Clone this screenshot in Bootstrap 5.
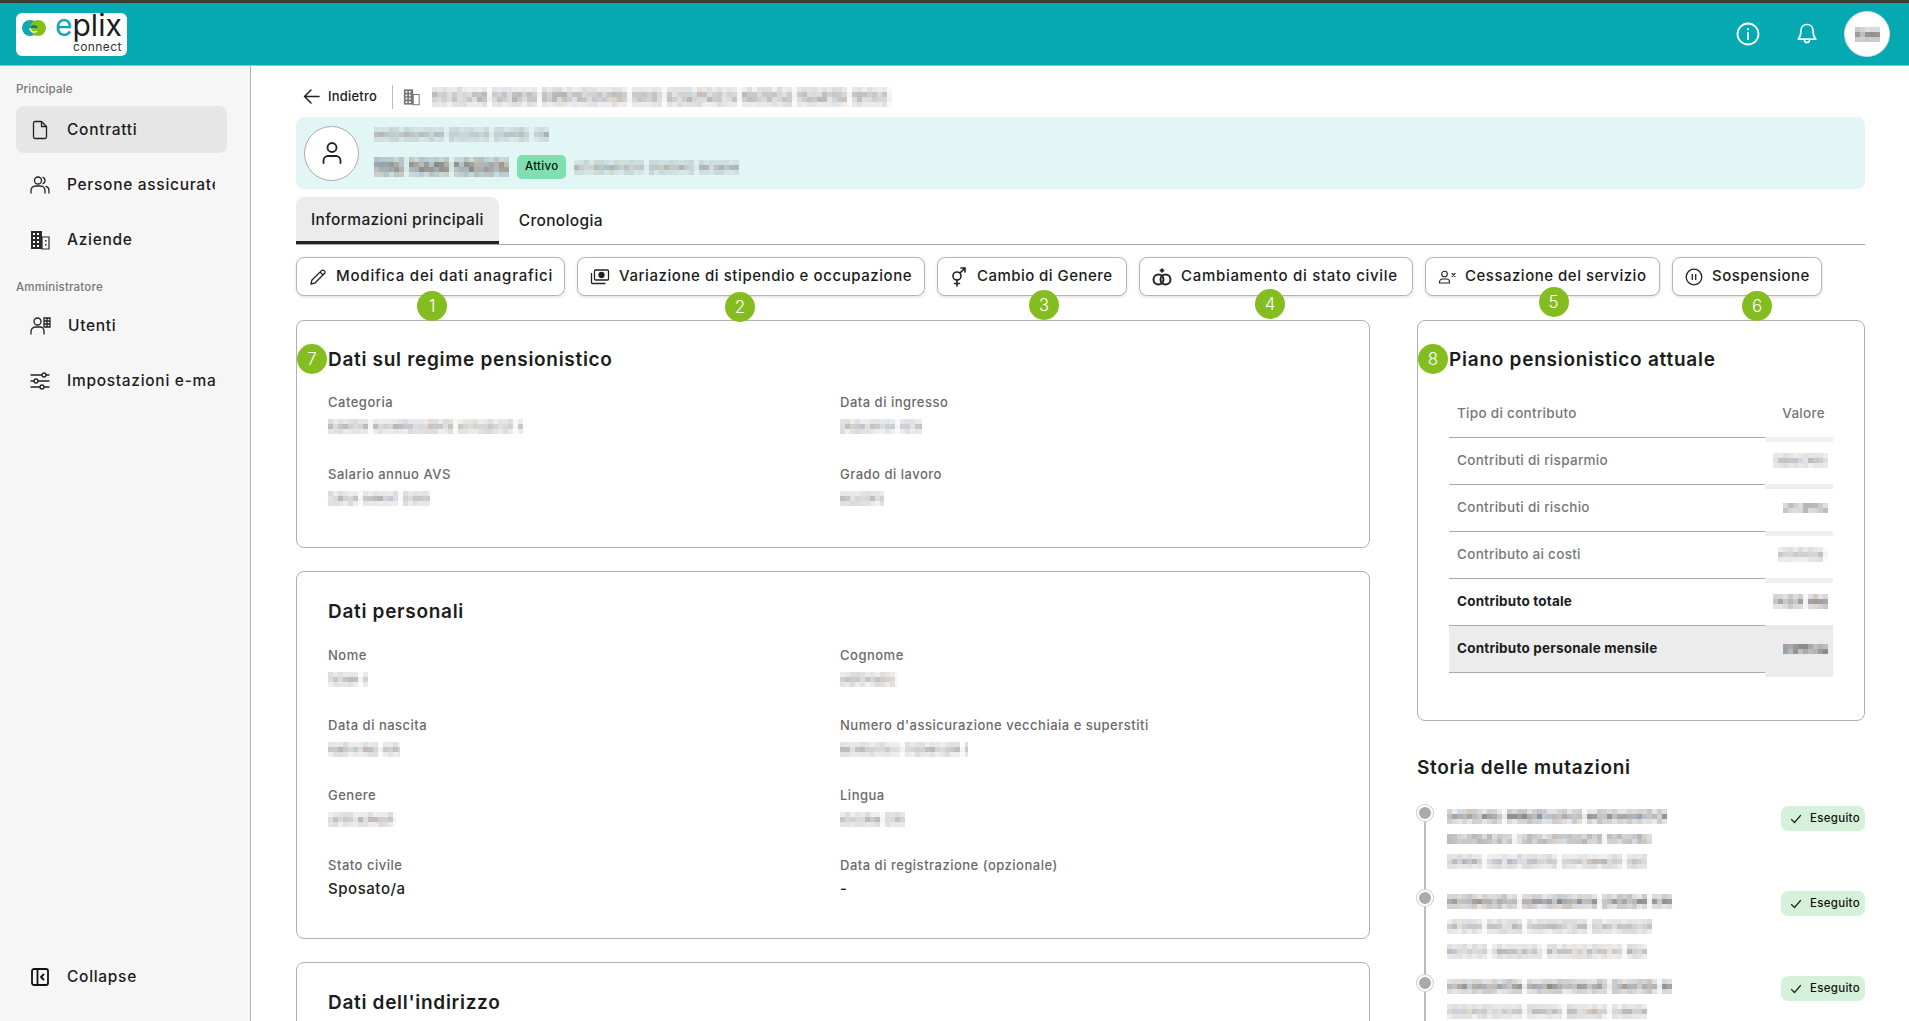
<!DOCTYPE html>
<html lang="it">
<head>
    <meta charset="UTF-8">
    <meta name="viewport" content="width=device-width, initial-scale=1.0">
    <title>ePlix Connect</title>
    <link href="https://cdn.jsdelivr.net/npm/bootstrap@5.3.0/dist/css/bootstrap.min.css" rel="stylesheet">
    <style>
        html, body { height: 100%; overflow: hidden; }
        body { font-family: Inter, "Open Sans", sans-serif; color: #1c1c1c; background: #fff; }
        svg { display: block; flex-shrink: 0; }

        .shell { height: 100vh; }
        .topbar { height: 66px; flex-shrink: 0; background: #04a9b1; border-top: 3px solid #3b3b3b; border-bottom: 1px solid #b5b5b5; padding: 0 19px 0 16px; }
        .logo-box { width: 111px; height: 43px; background: #fff; border-radius: 6px; padding: 0 7px 0 6px; gap: 9px; }
        .logo-mark { margin-top: 4px; }
        .logo-word { font-size: 30px; line-height: 26px; margin-top: -1px; letter-spacing: 0; color: #1d1d1d; white-space: nowrap; }
        .logo-word b { color: #11a6b3; font-weight: 400; }
        .logo-sub { font-size: 12px; line-height: 11px; margin-top: 3px; letter-spacing: .4px; color: #333; text-align: right; }
        .top-avatar { width: 46px; height: 46px; border-radius: 50%; background: #fff; border: 1px solid #ddd; margin-left: -10px; }
        .top-icons { gap: 35px; }

        .side { width: 251px; flex-shrink: 0; background: #f6f6f6; border-right: 1px solid #b0b0b0; padding: 14px 23px 21px 16px; }
        .side-head { font-size: 11.5px; line-height: 18px; font-weight: 500; color: #777; letter-spacing: .2px; }
        .side-head.is-second { margin-top: 15px; margin-bottom: 6px; }
        .side-link { height: 47px; gap: 17px; padding-left: 14px; border-radius: 8px; color: #1c1c1c; text-decoration: none; font-size: 15.5px; font-weight: 500; letter-spacing: .7px; }
        .side-link.is-on { background: #e6e6e6; }
        .side-link span { max-width: 148px; overflow: hidden; white-space: nowrap; }

        .main-area { padding: 0 44px 0 45px; min-width: 0; overflow: hidden; }
        .crumbs { height: 51px; padding-top: 10px; }
        .back-link { font-size: 13px; font-weight: 500; color: #1c1c1c; text-decoration: none; gap: 8px; padding-left: 7px; letter-spacing: .2px; }
        .crumb-sep { width: 1px; height: 24px; background: #bbb; margin: 0 10px 0 15px; }
        .person-band { height: 72px; background: #e3f6f6; border-radius: 8px; padding: 0 8px; gap: 15px; }
        .person-pic { width: 55px; height: 55px; border-radius: 50%; background: #fff; border: 1px solid #aaa; }
        .person-lines { gap: 13px; }
        .state-pill { background: #7fdfb0; border-radius: 5px; font-size: 11.5px; font-weight: 500; letter-spacing: .3px; height: 24px; padding: 0 8px; color: #111; }

        .page-tabs { margin-top: 8px; border-bottom: 1px solid #aaa; height: 48px; }
        .page-tabs .nav-link { height: 47px; padding: 0 15px; color: #1c1c1c; font-size: 15.5px; font-weight: 500; border-radius: 8px 8px 0 0; letter-spacing: .35px; }
        .page-tabs .nav-link.active { background: #ececec; border-bottom: 3px solid #222; padding-top: 2px; color: #1c1c1c; }
        .page-tabs .nav-item + .nav-item .nav-link { margin-left: 5px; }

        .action-row { gap: 12px; margin-top: 12px; }
        .act-btn { height: 39px; gap: 9px; padding: 0 0 0 12px; background: #fff; border: 1px solid #b5b5b5; border-radius: 8px; box-shadow: 0 1px 3px rgba(0,0,0,.15); color: #1c1c1c; font-size: 15px; font-weight: 500; white-space: nowrap; }
        .act-btn:hover { background: #fff; color: #1c1c1c; border-color: #b5b5b5; }
        .act-one { width: 269px; letter-spacing: .8px; }
        .act-two { width: 348px; letter-spacing: .57px; }
        .act-three { width: 190px; letter-spacing: .45px; }
        .act-four { width: 274px; letter-spacing: .7px; }
        .act-five { width: 235px; letter-spacing: .5px; }
        .act-six { width: 150px; letter-spacing: .45px; }
        .step-dot { position: absolute; width: 30px; height: 30px; border-radius: 50%; background: #84bd1f; color: #fff; font-size: 17px; font-weight: 300; line-height: 30px; text-align: center; letter-spacing: 0; z-index: 2; }
        .act-btn .step-dot { left: 50%; top: 100%; }
        .act-btn .step-a { margin-left: -13.500px; margin-top: -4px; }
        .act-btn .step-b { margin-left: -26px; margin-top: -3px; }
        .act-btn .step-c { margin-left: -3px; margin-top: -5px; }
        .act-btn .step-d { margin-left: -21px; margin-top: -6px; }
        .act-btn .step-e { margin-left: -4px; margin-top: -8px; }
        .act-btn .step-f { margin-left: -5px; margin-top: -4px; }

        .cols { gap: 47px; margin-top: 24px; align-items: flex-start; }
        .col-left { width: 1074px; flex-shrink: 0; }
        .col-right { width: 448px; flex-shrink: 0; }
        .info-card { border: 1px solid #b0b0b0; border-radius: 8px; margin-bottom: 23px; padding: 25px 31px 39px; position: relative; }
        .info-card.first-card { padding: 24px 31px 39px; }
        .info-card.first-card .field-grid { row-gap: 28px; }
        .info-card.cut-card { padding-bottom: 24px; }
        .info-title { font-size: 19px; line-height: 30px; font-weight: 600; letter-spacing: .7px; margin: 0 0 18px; }
        .first-card .info-title { margin-bottom: 17px; }
        .step-dot.on-title { left: 0; top: 23px; }
        .field-grid { grid-template-columns: 512px 1fr; row-gap: 26px; }
        .field-label { font-size: 13px; line-height: 20px; font-weight: 500; color: #6a6a6a; letter-spacing: .5px; }
        .field-value { min-height: 20px; margin-top: 4px; font-size: 15px; line-height: 20px; font-weight: 500; letter-spacing: .55px; }
        .field-value .smudge { display: block; padding-top: 3px; }

        .plan-card { padding: 24px 31px 43px; margin-bottom: 32px; }
        .info-title.plan-head { margin-bottom: 15px; letter-spacing: .75px; }
        .info-title.mut-head { margin-bottom: 22px; }
        .plan-table { --bs-table-bg: transparent; margin: 0; table-layout: fixed; }
        .plan-table th, .plan-table td { height: 47px; padding: 0 8px; vertical-align: middle; border-bottom: 1px solid #aaa; font-size: 13.5px; font-weight: 500; color: #777; letter-spacing: .3px; }
        .plan-table .val-cell { width: 68px; padding: 0 5px 0 0; text-align: right; border-bottom: 0; }
        .plan-table th.val-cell { padding-right: 8px; }
        .plan-table td.val-cell { box-shadow: inset 0 5px 0 #efefef; }
        .plan-table .val-cell svg { margin-left: auto; }
        .plan-table tr.is-sum td { color: #1c1c1c; font-weight: 700; letter-spacing: .2px; }
        .plan-table tr.is-month td { background: #ececec; }
        .plan-table tr.is-month td.val-cell { box-shadow: inset 0 5px 0 #e8e8e8; }
        .plan-table tr.tail-row td { height: 5px; padding: 0; border: 0; box-shadow: none; }
        .plan-table tr.tail-row td.val-cell { background: #ececec; }

        .mut-item { height: 85px; gap: 14px; }
        .mut-track { width: 16px; flex-shrink: 0; }
        .mut-dot { width: 16px; height: 16px; border-radius: 50%; background: #aaa; border: 2px solid #fff; box-shadow: 0 0 0 1px #ccc; flex-shrink: 0; }
        .mut-line { width: 2px; flex-grow: 1; background: #bbb; margin-top: 1px; }
        .mut-lines { gap: 10px; padding-top: 4px; }
        .ok-pill { height: 25px; width: 84px; gap: 8px; padding-left: 9px; background: #d5f1d9; border-radius: 7px; font-size: 11.5px; font-weight: 500; letter-spacing: .3px; color: #111; margin-top: 1px; }
    </style>
</head>
<body>
<div class="shell d-flex flex-column">

    <header class="topbar d-flex align-items-center justify-content-between">
        <div class="logo-box d-flex">
            <svg class="logo-mark" width="24" height="24" viewBox="0 0 24 24" aria-hidden="true">
                <circle cx="8" cy="11" r="8" fill="#11a6b3"/>
                <circle cx="16" cy="11" r="8" fill="#86bf20"/>
                <path d="M8 11h8a4.200 4.200 0 0 0-8 0z" fill="#0b7f76"/>
                <path d="M8 11a4.200 4.200 0 0 0 7 3" fill="none" stroke="#e7f2c5" stroke-width="1.600"/>
            </svg>
            <div class="flex-grow-1">
                <div class="logo-word"><b>e</b>plix</div>
                <div class="logo-sub">connect</div>
            </div>
        </div>
        <div class="top-icons d-flex align-items-center">
            <svg width="24" height="24" viewBox="0 0 24 24" fill="none" stroke="#fff" stroke-width="1.800" stroke-linecap="round"><circle cx="12" cy="12" r="10.500"/><path d="M12 11v6"/><path d="M12 7v.4"/></svg>
            <svg width="24" height="24" viewBox="0 0 24 24" fill="none" stroke="#fff" stroke-width="1.700" stroke-linejoin="round"><path d="M12 2.500c-3.600 0-6 2.700-6 6.200 0 4.500-1 6.400-2.800 8.500h17.600C19 15.100 18 13.200 18 8.700c0-3.500-2.400-6.200-6-6.200z"/><path d="M9.500 18a2.500 2.500 0 0 0 5 0"/></svg>
            <div class="top-avatar d-flex align-items-center justify-content-center"><span class="smudge" data-w="25" data-h="15" data-tone="dark"></span></div>
        </div>
    </header>

    <div class="d-flex flex-grow-1 overflow-hidden">
        <aside class="side d-flex flex-column">
            <div class="side-head mb-2">Principale</div>
            <nav class="nav flex-column gap-2">
                <a class="side-link is-on d-flex align-items-center" href="#">
                    <svg width="20" height="20" viewBox="0 0 20 20" fill="none" stroke="#222" stroke-width="1.300" stroke-linejoin="round"><path d="M3.500 3.200A1.700 1.700 0 0 1 5.200 1.500h6.300l5 5v10.300a1.700 1.700 0 0 1-1.700 1.700H5.200a1.700 1.700 0 0 1-1.700-1.700z"/><path d="M11.500 1.500v5h5"/></svg>
                    <span>Contratti</span>
                </a>
                <a class="side-link d-flex align-items-center" href="#">
                    <svg width="20" height="20" viewBox="0 0 20 20" fill="none" stroke="#222" stroke-width="1.300" stroke-linecap="round"><circle cx="8" cy="5.500" r="3.500"/><path d="M1 18v-2.500A4.500 4.500 0 0 1 5.500 11h5a4.500 4.500 0 0 1 4.500 4.500V18"/><path d="M13 2.300a3.500 3.500 0 0 1 0 6.400"/><path d="M16 11.300a4.500 4.500 0 0 1 3 4.200V18"/></svg>
                    <span>Persone assicurate</span>
                </a>
                <a class="side-link d-flex align-items-center" href="#">
                    <svg width="20" height="20" viewBox="0 0 20 20" aria-hidden="true"><path d="M1 1h11v18H1z" fill="#2a2a2a"/><path d="M12 7h7v12h-7z" fill="none" stroke="#2a2a2a" stroke-width="1.200"/><path d="M3 3h2v2H3zM7 3h2v2H7zM3 7h2v2H3zM7 7h2v2H7zM3 11h2v2H3zM7 11h2v2H7zM3 15h2v2H3zM7 15h2v2H7z" fill="#f6f6f6"/><path d="M15 10h1.500v1.500H15zM15 14h1.500v1.500H15z" fill="#2a2a2a"/></svg>
                    <span>Aziende</span>
                </a>
            </nav>
            <div class="side-head is-second">Amministratore</div>
            <nav class="nav flex-column gap-2">
                <a class="side-link d-flex align-items-center" href="#">
                    <svg width="21" height="20" viewBox="0 0 21 20" fill="none" stroke="#222" stroke-width="1.300" stroke-linecap="round"><circle cx="7.500" cy="5.500" r="3.500"/><path d="M1 18v-2.500A4.500 4.500 0 0 1 5.500 11H10a4 4 0 0 1 4 4v3"/><path d="M14 2h6v9h-6zM14 5h6M14 8h6M17 2v9"/></svg>
                    <span>Utenti</span>
                </a>
                <a class="side-link d-flex align-items-center" href="#">
                    <svg width="20" height="20" viewBox="0 0 20 20" fill="none" stroke="#222" stroke-width="1.300" stroke-linecap="round"><path d="M1 4h11M16 4h3M1 10h3M8 10h11M1 16h9M14 16h5"/><circle cx="14" cy="4" r="2"/><circle cx="6" cy="10" r="2"/><circle cx="12" cy="16" r="2"/></svg>
                    <span>Impostazioni e-mail</span>
                </a>
            </nav>
            <a class="side-link d-flex align-items-center mt-auto" href="#">
                <svg width="20" height="20" viewBox="0 0 20 20" fill="none" stroke="#111" stroke-width="1.800" stroke-linejoin="round"><rect x="2" y="2" width="16" height="16" rx="2"/><path d="M7.500 2v16"/><path d="M13.500 7.500 11 10l2.500 2.500" stroke-linecap="round"/></svg>
                <span>Collapse</span>
            </a>
        </aside>

        <main class="main-area flex-grow-1">
            <div class="crumbs d-flex align-items-center">
                <a class="back-link d-flex align-items-center" href="#">
                    <svg width="17" height="17" viewBox="0 0 17 17" fill="none" stroke="#222" stroke-width="1.500" stroke-linecap="round" stroke-linejoin="round"><path d="M16 8.500H1.500M8 2 1.500 8.500 8 15"/></svg>
                    Indietro
                </a>
                <div class="crumb-sep"></div>
                <svg class="me-2" width="17" height="18" viewBox="0 0 20 20" aria-hidden="true"><path d="M1 1h11v18H1z" fill="#777"/><path d="M12 7h7v12h-7z" fill="none" stroke="#777" stroke-width="1.200"/><path d="M3 3h2v2H3zM7 3h2v2H7zM3 7h2v2H3zM7 7h2v2H7zM3 11h2v2H3zM7 11h2v2H7zM3 15h2v2H3zM7 15h2v2H7z" fill="#fff"/></svg>
                <span class="smudge ms-1" data-w="460" data-h="20"></span>
            </div>

            <section class="person-band d-flex align-items-center">
                <div class="person-pic d-flex align-items-center justify-content-center">
                    <svg width="22" height="24" viewBox="0 0 22 24" fill="none" stroke="#222" stroke-width="1.800" stroke-linecap="round"><circle cx="11" cy="6.500" r="4.500"/><path d="M2.500 22v-2.500a4.500 4.500 0 0 1 4.500-4.500h8a4.500 4.500 0 0 1 4.500 4.500V22"/></svg>
                </div>
                <div class="person-lines d-flex flex-column">
                    <span class="smudge" data-w="175" data-h="15"></span>
                    <div class="d-flex align-items-center gap-2">
                        <span class="smudge" data-w="135" data-h="20" data-tone="dark"></span>
                        <span class="state-pill d-flex align-items-center">Attivo</span>
                        <span class="smudge" data-w="165" data-h="15"></span>
                    </div>
                </div>
            </section>

            <ul class="nav page-tabs">
                <li class="nav-item"><a class="nav-link active d-flex align-items-center" href="#">Informazioni principali</a></li>
                <li class="nav-item"><a class="nav-link d-flex align-items-center" href="#">Cronologia</a></li>
            </ul>

            <div class="action-row d-flex">
                <button class="btn act-btn act-one d-flex align-items-center position-relative" type="button">
                    <svg width="18" height="18" viewBox="0 0 18 18" fill="none" stroke="#222" stroke-width="1.300" stroke-linejoin="round"><path d="M2 16l.8-3.700L12.500 2.600a1.800 1.800 0 0 1 2.600 0l.3.300a1.800 1.800 0 0 1 0 2.600L5.700 15.200z"/><path d="M11 4l3 3"/></svg>
                    Modifica dei dati anagrafici
                    <span class="step-dot step-a">1</span>
                </button>
                <button class="btn act-btn act-two d-flex align-items-center position-relative" type="button">
                    <svg width="20" height="18" viewBox="0 0 20 18" fill="none" stroke="#222" stroke-width="1.300"><rect x="4.500" y="2" width="14" height="10" rx="1"/><circle cx="11.500" cy="7" r="2.500" fill="#222"/><path d="M1.500 5v9.500a1 1 0 0 0 1 1h13"/></svg>
                    Variazione di stipendio e occupazione
                    <span class="step-dot step-b">2</span>
                </button>
                <button class="btn act-btn act-three d-flex align-items-center position-relative" type="button">
                    <svg width="18" height="20" viewBox="0 0 18 20" fill="none" stroke="#222" stroke-width="1.600" stroke-linecap="round"><circle cx="7" cy="9" r="4"/><path d="M7 13v6M4.500 16.500h5M10 6l5-5M11 1h4v4"/></svg>
                    Cambio di Genere
                    <span class="step-dot step-c">3</span>
                </button>
                <button class="btn act-btn act-four d-flex align-items-center position-relative" type="button">
                    <svg width="20" height="20" viewBox="0 0 20 20" fill="none" stroke="#222" stroke-width="2"><circle cx="6.500" cy="12.500" r="5"/><circle cx="13.500" cy="12.500" r="5"/><path d="M10 1.500l2 2-2 2-2-2z" fill="#222" stroke-width="1"/></svg>
                    Cambiamento di stato civile
                    <span class="step-dot step-d">4</span>
                </button>
                <button class="btn act-btn act-five d-flex align-items-center position-relative" type="button">
                    <svg width="18" height="14" viewBox="0 0 18 14" fill="none" stroke="#222" stroke-width="1.100" stroke-linecap="round"><circle cx="6.500" cy="4" r="2.800"/><path d="M1.500 13v-1a3 3 0 0 1 3-3h4a3 3 0 0 1 3 3v1zM14 3.500l3 3M17 3.500l-3 3"/></svg>
                    Cessazione del servizio
                    <span class="step-dot step-e">5</span>
                </button>
                <button class="btn act-btn act-six d-flex align-items-center position-relative" type="button">
                    <svg width="18" height="18" viewBox="0 0 18 18" fill="none" stroke="#222" stroke-width="1.300"><circle cx="9" cy="9" r="7.800"/><path d="M7.300 6v6M10.700 6v6"/></svg>
                    Sospensione
                    <span class="step-dot step-f">6</span>
                </button>
            </div>

            <div class="cols d-flex">
                <div class="col-left">
                    <section class="info-card first-card">
                        <span class="step-dot on-title">7</span>
                        <h5 class="info-title">Dati sul regime pensionistico</h5>
                        <div class="field-grid d-grid">
                            <div><div class="field-label">Categoria</div><div class="field-value"><span class="smudge" data-w="195" data-h="15"></span></div></div>
                            <div><div class="field-label">Data di ingresso</div><div class="field-value"><span class="smudge" data-w="82" data-h="15"></span></div></div>
                            <div><div class="field-label">Salario annuo AVS</div><div class="field-value"><span class="smudge" data-w="102" data-h="15"></span></div></div>
                            <div><div class="field-label">Grado di lavoro</div><div class="field-value"><span class="smudge" data-w="44" data-h="15"></span></div></div>
                        </div>
                    </section>
                    <section class="info-card">
                        <h5 class="info-title">Dati personali</h5>
                        <div class="field-grid d-grid">
                            <div><div class="field-label">Nome</div><div class="field-value"><span class="smudge" data-w="40" data-h="15"></span></div></div>
                            <div><div class="field-label">Cognome</div><div class="field-value"><span class="smudge" data-w="58" data-h="15"></span></div></div>
                            <div><div class="field-label">Data di nascita</div><div class="field-value"><span class="smudge" data-w="72" data-h="15"></span></div></div>
                            <div><div class="field-label">Numero d'assicurazione vecchiaia e superstiti</div><div class="field-value"><span class="smudge" data-w="128" data-h="15"></span></div></div>
                            <div><div class="field-label">Genere</div><div class="field-value"><span class="smudge" data-w="68" data-h="15"></span></div></div>
                            <div><div class="field-label">Lingua</div><div class="field-value"><span class="smudge" data-w="65" data-h="15"></span></div></div>
                            <div><div class="field-label">Stato civile</div><div class="field-value">Sposato/a</div></div>
                            <div><div class="field-label">Data di registrazione (opzionale)</div><div class="field-value">-</div></div>
                        </div>
                    </section>
                    <section class="info-card cut-card">
                        <h5 class="info-title">Dati dell'indirizzo</h5>
                    </section>
                </div>

                <div class="col-right">
                    <section class="info-card plan-card">
                        <span class="step-dot on-title">8</span>
                        <h5 class="info-title plan-head">Piano pensionistico attuale</h5>
                        <table class="table plan-table">
                            <thead><tr><th>Tipo di contributo</th><th class="val-cell">Valore</th></tr></thead>
                            <tbody>
                                <tr><td>Contributi di risparmio</td><td class="val-cell"><span class="smudge" data-w="55" data-h="15"></span></td></tr>
                                <tr><td>Contributi di rischio</td><td class="val-cell"><span class="smudge" data-w="45" data-h="10"></span></td></tr>
                                <tr><td>Contributo ai costi</td><td class="val-cell"><span class="smudge" data-w="50" data-h="15"></span></td></tr>
                                <tr class="is-sum"><td>Contributo totale</td><td class="val-cell"><span class="smudge" data-w="55" data-h="15" data-tone="dark"></span></td></tr>
                                <tr class="is-sum is-month"><td>Contributo personale mensile</td><td class="val-cell"><span class="smudge" data-w="45" data-h="10" data-tone="dark"></span></td></tr>
                                <tr class="tail-row"><td></td><td class="val-cell"></td></tr>
                            </tbody>
                        </table>
                    </section>

                    <h5 class="info-title mut-head">Storia delle mutazioni</h5>
                    <div class="mut-item d-flex">
                        <div class="mut-track d-flex flex-column align-items-center"><div class="mut-dot"></div><div class="mut-line"></div></div>
                        <div class="mut-lines d-flex flex-column flex-grow-1">
                            <span class="smudge" data-w="220" data-h="15" data-tone="dark"></span>
                            <span class="smudge" data-w="205" data-h="10"></span>
                            <span class="smudge" data-w="200" data-h="15"></span>
                        </div>
                        <div class="ok-pill d-flex align-items-center">
                            <svg width="12" height="10" viewBox="0 0 12 10" fill="none" stroke="#222" stroke-width="1.200" stroke-linecap="round"><path d="M1.500 5.500 4.500 8.500 10.500 1.500"/></svg>
                            Eseguito
                        </div>
                    </div>
                    <div class="mut-item d-flex">
                        <div class="mut-track d-flex flex-column align-items-center"><div class="mut-dot"></div><div class="mut-line"></div></div>
                        <div class="mut-lines d-flex flex-column flex-grow-1">
                            <span class="smudge" data-w="225" data-h="15" data-tone="dark"></span>
                            <span class="smudge" data-w="205" data-h="15"></span>
                            <span class="smudge" data-w="200" data-h="15"></span>
                        </div>
                        <div class="ok-pill d-flex align-items-center">
                            <svg width="12" height="10" viewBox="0 0 12 10" fill="none" stroke="#222" stroke-width="1.200" stroke-linecap="round"><path d="M1.500 5.500 4.500 8.500 10.500 1.500"/></svg>
                            Eseguito
                        </div>
                    </div>
                    <div class="mut-item d-flex">
                        <div class="mut-track d-flex flex-column align-items-center"><div class="mut-dot"></div><div class="mut-line"></div></div>
                        <div class="mut-lines d-flex flex-column flex-grow-1">
                            <span class="smudge" data-w="225" data-h="15" data-tone="dark"></span>
                            <span class="smudge" data-w="200" data-h="15"></span>
                            <span class="smudge" data-w="200" data-h="15"></span>
                        </div>
                        <div class="ok-pill d-flex align-items-center">
                            <svg width="12" height="10" viewBox="0 0 12 10" fill="none" stroke="#222" stroke-width="1.200" stroke-linecap="round"><path d="M1.500 5.500 4.500 8.500 10.500 1.500"/></svg>
                            Eseguito
                        </div>
                    </div>
                </div>
            </div>
        </main>
    </div>
</div>

<script>
    // the reference has its personal data pixelated: draw the same mosaic of 5px cells
    let seed = 7;
    function rnd() {
        seed = (seed * 16807) % 2147483647;
        return seed / 2147483647;
    }

    document.querySelectorAll(".smudge").forEach(el => {
        const w = Number(el.dataset.w), h = Number(el.dataset.h);
        const strength = el.dataset.tone === "dark" ? 0.8 : 0.5;
        const rows = h / 5;
        let cells = "";
        let wordLeft = 6 + Math.floor(rnd() * 10);
        for (let x = 0; x < w; x += 5) {
            const gap = wordLeft-- <= 0;
            if (gap) wordLeft = 6 + Math.floor(rnd() * 12);
            for (let r = 0; r < rows; r++) {
                const edge = rows > 2 && (r === 0 || r === rows - 1);
                let a = (0.45 + rnd() * 0.55) * strength * (edge ? 0.5 : 1);
                if (gap) a *= 0.2;
                const c = rnd() > 0.8 ? "120,135,155" : (rnd() > 0.7 ? "135,115,100" : "110,110,110");
                cells += `<rect x="${x}" y="${r * 5}" width="5" height="5" fill="rgba(${c},${a.toFixed(2)})"/>`;
            }
        }
        el.innerHTML = `<svg width="${w}" height="${h}" viewBox="0 0 ${w} ${h}" aria-hidden="true">${cells}</svg>`;
    });
</script>
<script src="https://cdn.jsdelivr.net/npm/bootstrap@5.3.0/dist/js/bootstrap.bundle.min.js"></script>
</body>
</html>
